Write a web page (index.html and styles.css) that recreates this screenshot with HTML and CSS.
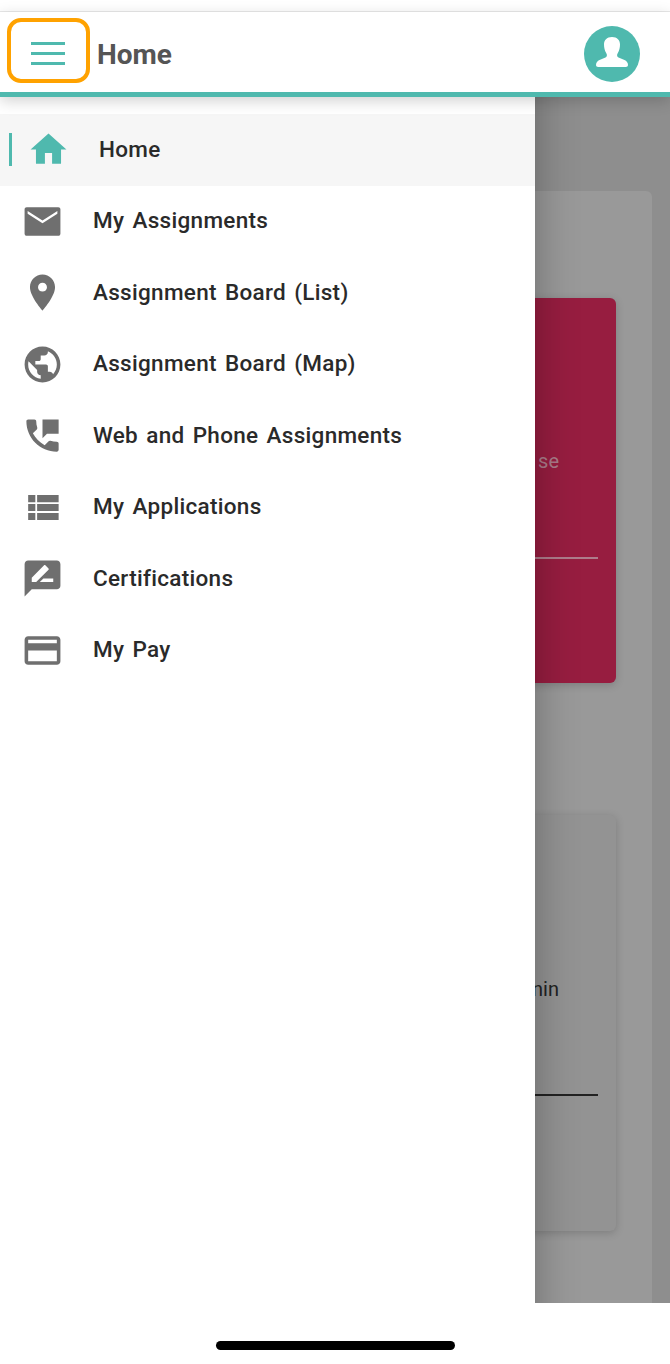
FILE: index.html
```html
<!DOCTYPE html>
<html lang="en">
<head>
  <meta charset="UTF-8">
  <meta name="viewport" content="width=device-width, initial-scale=1">
  <title>Home</title>
  <link rel="stylesheet" href="styles.css">
</head>
<body>
  <div class="screen">
    <div class="status-strip"></div>

    <header class="topbar">
      <button class="menu-btn" aria-label="Menu">
        <span></span><span></span><span></span>
      </button>
      <h1 class="page-title">Home</h1>
      <div class="avatar">
        <svg viewBox="0 0 56 56" width="56" height="56">
          <path d="M28 11c-5.300 0-8 3.200-8 7.600 0 3.200 .7 6.200 2.300 8.600 1 1.500 .9 3.300 -.8 4.200l-6 2.700c-2 .9-3.500 2.500-3.500 5 0 1.300 .9 1.900 2.200 1.900h27.600c1.300 0 2.200-.6 2.200-1.900 0-2.500-1.500-4.100-3.500-5l-6-2.700c-1.700-.9-1.800-2.700-.8-4.200 1.600-2.400 2.300-5.400 2.300-8.600 0-4.400-2.700-7.600-8-7.600z"/>
        </svg>
      </div>
    </header>

    <main class="content">
      <section class="panel">
        <div class="card card-red">
          <p class="card-text">se</p>
          <div class="card-line"></div>
        </div>
        <div class="card card-grey">
          <p class="card-text">nin</p>
          <div class="card-line"></div>
        </div>
      </section>

      <nav class="drawer">
        <a class="nav-item active">
          <svg viewBox="0 0 24 24"><path d="M10 20v-6h4v6h5v-8h3L12 3 2 12h3v8z"/></svg>
          <span>Home</span>
        </a>
        <a class="nav-item">
          <svg viewBox="0 0 24 24"><path fill-rule="evenodd" d="M3.200 4h17.600c.7 0 1.200 .5 1.200 1.200v13.600c0 .7-.5 1.200-1.200 1.200H3.200C2.500 20 2 19.500 2 18.800V5.200C2 4.500 2.500 4 3.200 4zM3.700 6.200l8.300 5.300 8.300-5.300v1.500l-8.300 5.300-8.300-5.300z"/></svg>
          <span>My Assignments</span>
        </a>
        <a class="nav-item">
          <svg viewBox="0 0 24 24"><path d="M12 2C8.130 2 5 5.130 5 9c0 5.250 7 13 7 13s7-7.750 7-13c0-3.870-3.130-7-7-7zm0 9.500c-1.380 0-2.500-1.120-2.500-2.500s1.120-2.500 2.500-2.500 2.500 1.120 2.500 2.500-1.120 2.500-2.500 2.500z"/></svg>
          <span>Assignment Board (List)</span>
        </a>
        <a class="nav-item">
          <svg viewBox="0 0 24 24"><path d="M12 2C6.480 2 2 6.480 2 12s4.480 10 10 10 10-4.480 10-10S17.520 2 12 2zm-1 17.930c-3.950-.49-7-3.850-7-7.930 0-.62 .08-1.210 .21-1.790L9 15v1c0 1.100 .9 2 2 2v1.930zm6.900-2.540c-.26-.81-1-1.390-1.900-1.390h-1v-3c0-.55-.45-1-1-1H8v-2h2c.55 0 1-.45 1-1V7h2c1.100 0 2-.9 2-2v-.41c2.930 1.190 5 4.060 5 7.410 0 2.080-.8 3.970-2.100 5.390z"/></svg>
          <span>Assignment Board (Map)</span>
        </a>
        <a class="nav-item">
          <svg viewBox="0 0 24 24"><path d="M6.620 10.790c1.440 2.830 3.760 5.140 6.590 6.590l2.200-2.200c.27-.27 .67-.36 1.020-.24 1.120 .37 2.330 .57 3.570 .57 .55 0 1 .45 1 1V20c0 .55-.45 1-1 1-9.390 0-17-7.610-17-17 0-.55 .45-1 1-1h3.500c.55 0 1 .45 1 1 0 1.250 .2 2.450 .57 3.570 .11 .35 .03 .74-.25 1.020l-2.200 2.200z"/><path d="M12 3h9v8h-6.500L12 13.500z"/></svg>
          <span>Web and Phone Assignments</span>
        </a>
        <a class="nav-item">
          <svg viewBox="0 0 24 24"><path d="M4 14h4v-4H4v4zm0 5h4v-4H4v4zM4 9h4V5H4v4zm5 5h12v-4H9v4zm0 5h12v-4H9v4zM9 5v4h12V5H9z"/></svg>
          <span>My Applications</span>
        </a>
        <a class="nav-item">
          <svg viewBox="0 0 24 24"><path d="M20 2H4c-1.100 0-1.990 .9-1.990 2L2 22l4-4h14c1.100 0 2-.9 2-2V4c0-1.100-.9-2-2-2zM6 14v-2.470l6.880-6.880c.2-.2 .51-.2 .71 0l1.770 1.770c.2 .2 .2 .51 0 .71L8.470 14H6zm12 0h-7.500l2-2H18v2z"/></svg>
          <span>Certifications</span>
        </a>
        <a class="nav-item">
          <svg viewBox="0 0 24 24"><path d="M20 4H4c-1.110 0-1.990 .89-1.990 2L2 18c0 1.110 .89 2 2 2h16c1.110 0 2-.89 2-2V6c0-1.110-.89-2-2-2zm0 14H4v-6h16v6zm0-10H4V6h16v2z"/></svg>
          <span>My Pay</span>
        </a>
      </nav>
    </main>

    <div class="home-bar">
      <div class="home-indicator"></div>
    </div>
  </div>
</body>
</html>
```

FILE: styles.css
```css
* {
  box-sizing: border-box;
}
html, body {
  margin: 0;
  background: #fff;
}
.screen {
  width: 670px;
  height: 1364px;
  display: flex;
  flex-direction: column;
  overflow: hidden;
  font-family: Roboto, 'Liberation Sans', sans-serif;
}
.status-strip {
  height: 12px;
  flex: none;
  border-bottom: 1px solid #e9e9e9;
}
.topbar {
  height: 85px;
  flex: none;
  display: flex;
  align-items: center;
  padding: 4px 30px 0 7px;
  background: #fff;
  border-bottom: 5px solid #4fb9ae;
  box-shadow: 0 4px 14px rgba(0,0,0,0.18);
  position: relative;
  z-index: 3;
}
.menu-btn {
  width: 83px;
  height: 65px;
  margin-top: -7px;
  display: flex;
  flex-direction: column;
  align-items: center;
  justify-content: center;
  gap: 7px;
  padding: 6px 2px 0 0;
  background: none;
  border: 4px solid #ffa200;
  border-radius: 14px;
}
.menu-btn span {
  display: block;
  width: 34px;
  height: 3px;
  background: #4fb9ae;
}
.page-title {
  flex: 1;
  margin: 0 0 0 7px;
  font-size: 28px;
  font-weight: 700;
  color: #555;
}
.avatar {
  width: 56px;
  height: 56px;
  border-radius: 50%;
  background: #4fb9ae;
}
.avatar svg {
  display: block;
  fill: #fff;
}
.content {
  flex: 1;
  position: relative;
  padding: 94px 18px 0 0;
  background: #8e8e8e;
  overflow: hidden;
}
.panel {
  height: 100%;
  padding: 107px 36px 0 400px;
  background: #999;
  border-radius: 6px 6px 0 0;
}
.card {
  border-radius: 6px;
  padding: 0 18px 0 0;
  box-shadow: 0 2px 8px rgba(0,0,0,0.18);
}
.card-text {
  margin: 0;
  padding-right: 39px;
  text-align: right;
  font-size: 20px;
  line-height: 24px;
}
.card-line {
  height: 2px;
}
.card-red {
  height: 385px;
  padding-top: 151px;
  background: #971d40;
}
.card-red .card-text {
  color: #ab7c8a;
}
.card-red .card-line {
  margin-top: 84px;
  background: #ae7c8b;
}
.card-grey {
  height: 416px;
  margin-top: 132px;
  padding-top: 162px;
  background: #939393;
}
.card-grey .card-text {
  color: #222;
}
.card-grey .card-line {
  margin-top: 93px;
  background: #222;
}
/* runs past the top and bottom so the side shadow does not fade out at the ends */
.drawer {
  position: absolute;
  top: -60px;
  left: 0;
  bottom: -60px;
  width: 535px;
  padding-top: 77px;
  background: #fff;
  box-shadow: 0 0 40px rgba(0,0,0,0.3);
  z-index: 2;
}
.nav-item {
  height: 71.5px;
  display: flex;
  align-items: center;
  padding-left: 21px;
  gap: 29px;
  font-size: 22.5px;
  font-weight: 500;
  letter-spacing: 0.3px;
  word-spacing: 2.3px;
  color: #2a2a2a;
}
.nav-item span {
  padding-bottom: 2px;
}
.nav-item svg {
  width: 43px;
  height: 43px;
  flex: none;
  fill: #6f6f6f;
}
.nav-item.active {
  position: relative;
  padding-left: 27px;
  background: #f6f6f6;
}
.nav-item.active svg {
  fill: #4fb9ae;
}
.nav-item.active::before {
  content: '';
  position: absolute;
  left: 9px;
  top: 19px;
  width: 3px;
  height: 33px;
  background: #4fb9ae;
}
.home-bar {
  height: 61px;
  flex: none;
  padding-top: 38px;
  background: #fff;
  position: relative;
  z-index: 3;
}
.home-indicator {
  width: 239px;
  height: 9px;
  margin-left: 216px;
  border-radius: 5px;
  background: #000;
}
```
